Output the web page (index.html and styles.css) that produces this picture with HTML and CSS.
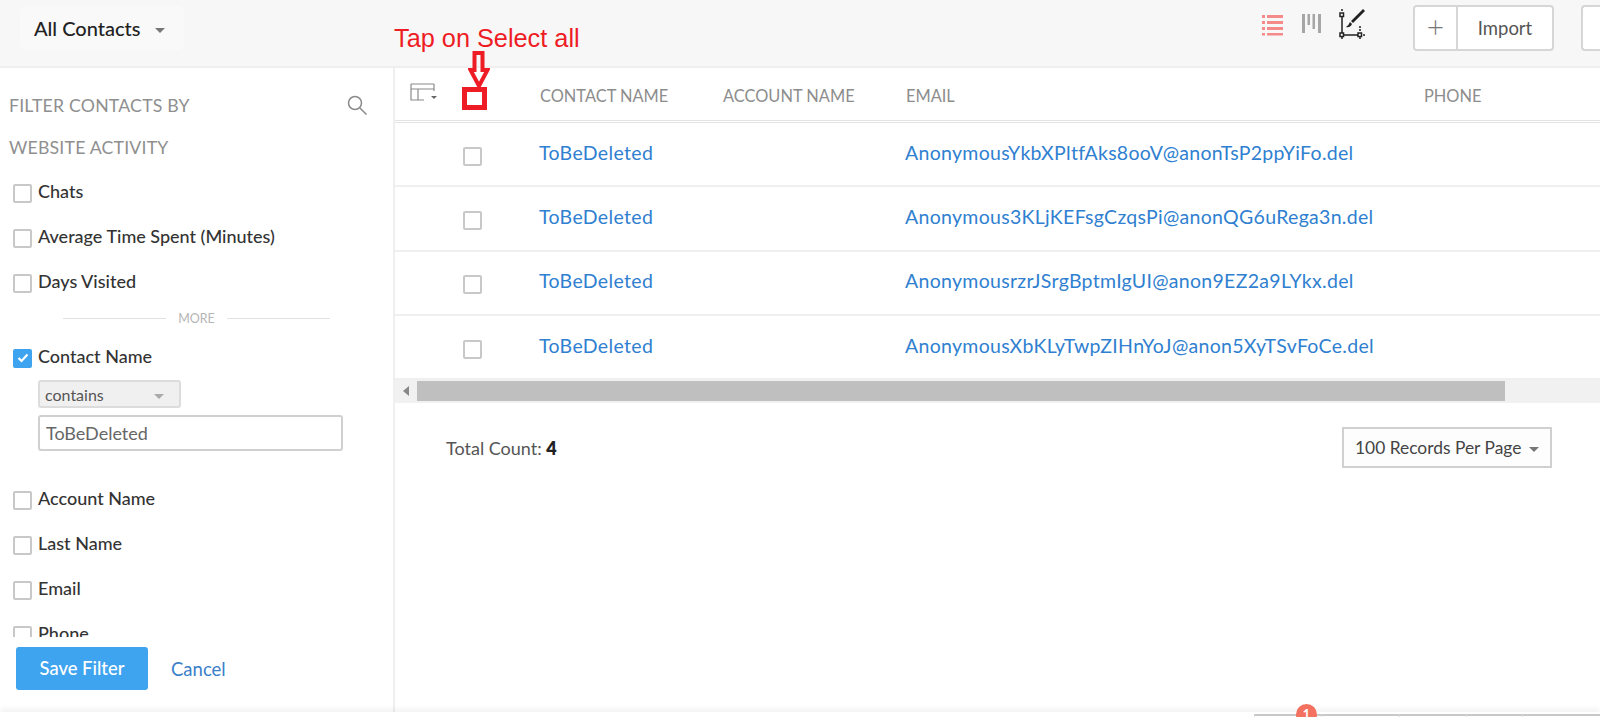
FILE: index.html
```html
<!DOCTYPE html>
<html lang="en">
<head>
<meta charset="utf-8">
<title>All Contacts</title>
<link rel="stylesheet" href="styles.css">
</head>
<body>
<div class="app">
  <header class="topbar">
    <div class="view-picker"><span>All Contacts</span><i class="caret"></i></div>
    <div class="top-actions">
      <div class="view-icons">
        <svg class="ico" width="21" height="24" viewBox="0 0 21 24"><g fill="#f58a8a"><rect x="0" y="2" width="3" height="3"/><rect x="5" y="2" width="16" height="3"/><rect x="0" y="8" width="3" height="3"/><rect x="5" y="8" width="16" height="3"/><rect x="0" y="14" width="3" height="3"/><rect x="5" y="14" width="16" height="3"/><rect x="0" y="20" width="3" height="2.500"/><rect x="5" y="20" width="16" height="2.500"/></g></svg>
        <svg class="ico" width="19" height="22" viewBox="0 0 19 22"><g fill="#a6a6a6"><rect x="0" y="1" width="3" height="19"/><rect x="5.500" y="1" width="2.500" height="11"/><rect x="10.500" y="1" width="2.500" height="15"/><rect x="16" y="1" width="3" height="19"/></g></svg>
        <svg class="ico" width="28" height="34" viewBox="0 0 28 34"><g fill="none" stroke="#222" stroke-width="1.500"><path d="M3 7V27H21"/><rect x="1" y="5" width="3.500" height="3.500" fill="#fff"/><rect x="1" y="25" width="3.500" height="3.500" fill="#fff"/><rect x="19" y="25" width="3.500" height="3.500" fill="#fff"/><path d="M3 1v3M3 29v3M21 18v6M21 29v3M24 27h3" stroke-dasharray="2 1"/></g><path d="M24 1 L26 3 L14 15 L12 13 Z M11 14 L13 16 Q11 20 7 19 Q10 17 11 14 Z" fill="#222"/></svg>
      </div>
      <div class="btn-group"><span class="btn-plus">+</span><span class="btn-import">Import</span></div>
      <div class="btn-edge"></div>
    </div>
  </header>

  <div class="main">
    <aside class="sidebar">
      <div class="side-head">
        <div class="side-title-row"><span>FILTER CONTACTS BY</span>
          <svg width="22" height="22" viewBox="0 0 22 22" fill="none" stroke="#8a8a8a" stroke-width="1.500"><circle cx="9" cy="9" r="6.500"/><path d="M14 14l6.500 6.500"/></svg>
        </div>
        <div class="side-title-row">WEBSITE ACTIVITY</div>
      </div>
      <div class="filters">
        <label class="filter"><i class="box"></i>Chats</label>
        <label class="filter"><i class="box"></i>Average Time Spent (Minutes)</label>
        <label class="filter"><i class="box"></i>Days Visited</label>
        <div class="more"><span>MORE</span></div>
        <label class="filter"><i class="box checked"><svg width="12" height="10" viewBox="0 0 12 10"><path d="M1.500 5l3 3 6-6.500" fill="none" stroke="#fff" stroke-width="2.200"/></svg></i>Contact Name</label>
        <div class="select">contains<i class="caret caret-light"></i></div>
        <div class="input">ToBeDeleted</div>
        <label class="filter filter-gap"><i class="box"></i>Account Name</label>
        <label class="filter"><i class="box"></i>Last Name</label>
        <label class="filter"><i class="box"></i>Email</label>
        <label class="filter"><i class="box"></i>Phone</label>
      </div>
      <div class="side-foot">
        <span class="btn-save">Save Filter</span>
        <span class="cancel">Cancel</span>
      </div>
    </aside>

    <section class="content">
      <div class="row row-head">
        <span class="col-icon">
          <svg width="28" height="22" viewBox="0 0 28 22" fill="none" stroke="#8a8a8a" stroke-width="1.200"><path d="M1 2h23M1 7h23M1 2v16h13M8 7v11M24 2v7" /><path d="M21 14h6l-3 3z" fill="#666" stroke="none"/></svg>
        </span>
        <span></span>
        <span class="hd">CONTACT NAME</span>
        <span class="hd">ACCOUNT NAME</span>
        <span class="hd">EMAIL</span>
        <span class="hd">PHONE</span>
      </div>
      <div class="row row-body"><span></span><i class="box"></i><a class="name">ToBeDeleted</a><span></span><a>AnonymousYkbXPltfAks8ooV@anonTsP2ppYiFo.del</a><span></span></div>
      <div class="row row-body"><span></span><i class="box"></i><a class="name">ToBeDeleted</a><span></span><a>Anonymous3KLjKEFsgCzqsPi@anonQG6uRega3n.del</a><span></span></div>
      <div class="row row-body"><span></span><i class="box"></i><a class="name">ToBeDeleted</a><span></span><a>AnonymousrzrJSrgBptmIgUI@anon9EZ2a9LYkx.del</a><span></span></div>
      <div class="row row-body"><span></span><i class="box"></i><a class="name">ToBeDeleted</a><span></span><a>AnonymousXbKLyTwpZIHnYoJ@anon5XyTSvFoCe.del</a><span></span></div>
      <div class="scrollbar"><i class="scroll-arrow"></i><div class="scroll-thumb"></div></div>
      <div class="table-foot">
        <span class="total">Total Count: <b>4</b></span>
        <span class="per-page">100 Records Per Page<i class="caret"></i></span>
      </div>
    </section>
  </div>

  <footer class="bottom">
    <span class="tab tab-a"><span class="badge">1</span></span><span class="tab tab-b"></span><span class="tab tab-c"></span><span class="tab tab-d"></span><span class="tab tab-e"></span>
  </footer>
</div>

<div class="note">Tap on Select all</div>
<svg class="note-arrow" width="22" height="38" viewBox="0 0 22 38" fill="none" stroke="#ee1c25" stroke-width="4"><path d="M6.500 2h8V19h5L11 35 2.500 19h4z"/></svg>
<div class="note-box"></div>
</body>
</html>
```
FILE: styles.css
```css
* { box-sizing: border-box; }
html, body { margin: 0; height: 100%; overflow: hidden; background: #fff; }
body { font-family: Lato, "Open Sans", sans-serif; color: #333; font-size: 16px; }
i { font-style: normal; display: block; }

.app { height: 717px; display: flex; flex-direction: column; }

/* top bar */
.topbar { height: 68px; flex: none; background: #f7f7f7; border-bottom: 2px solid #efefef; display: flex; justify-content: space-between; padding-left: 20px; }
.view-picker { width: 164px; height: 44px; margin-top: 6px; padding-left: 14px; background: #f9f9f9; border-radius: 6px; display: flex; align-items: center; font-size: 20px; font-weight: 500; color: #222; }
.caret { width: 0; height: 0; border-left: 5px solid transparent; border-right: 5px solid transparent; border-top: 5px solid #777; margin-left: 14px; margin-top: 4px; }
.caret-light { border-top-color: #aaa; margin-left: 50px; }
.top-actions { display: flex; align-items: flex-start; }
.view-icons { display: flex; align-items: flex-start; gap: 19px; margin-right: 46px; padding-top: 13px; }
.view-icons .ico:last-child { margin-top: -5px; margin-left: -1px; }
.btn-group { display: flex; width: 141px; height: 46px; margin-top: 5px; background: #fff; border: 2px solid #d6d6d6; border-radius: 4px; }
.btn-plus { width: 43px; border-right: 2px solid #d6d6d6; color: #777; font-size: 30px; font-weight: 300; line-height: 38px; text-align: center; }
.btn-import { flex: 1; text-align: center; line-height: 42px; font-size: 18.500px; color: #555; }
.btn-edge { width: 19px; height: 46px; margin-top: 5px; margin-left: 27px; background: #fff; border: 2px solid #d6d6d6; border-right: 0; border-radius: 4px 0 0 4px; }

/* main */
.main { flex: 1; min-height: 0; display: flex; }
.sidebar { width: 395px; flex: none; border-right: 2px solid #efefef; display: flex; flex-direction: column; }
.side-head { padding: 16px 25px 0 9px; }
.side-title-row { height: 42px; display: flex; align-items: center; justify-content: space-between; color: #8f8f8f; font-size: 17.700px; letter-spacing: .2px; }
.filters { height: 469px; flex: none; overflow: hidden; padding-left: 13px; }
.filter { height: 45px; display: flex; align-items: center; font-size: 18px; font-weight: 500; color: #333; }
.filter .box { margin-right: 6px; margin-top: 5px; }
.filter-gap { margin-top: 24px; }
.box { width: 19px; height: 19px; border: 2px solid #c8c8c8; border-radius: 2px; background: #fff; flex: none; }
.box.checked { background: #3fa4ef; border-color: #3fa4ef; display: flex; align-items: center; justify-content: center; }
.more { height: 30px; width: 267px; margin-left: 50px; display: flex; align-items: center; color: #b5b5b5; font-size: 12.500px; gap: 12px; }
.more::before, .more::after { content: ""; flex: 1; height: 1px; background: #e2e2e2; }
.select { width: 143px; height: 28px; margin: 2px 0 0 25px; padding-left: 5px; display: flex; align-items: center; background: #f0f0f0; border: 2px solid #dcdcdc; border-radius: 3px; color: #555; font-size: 16px; }
.input { width: 305px; height: 36px; margin: 7px 0 0 25px; padding-left: 6px; display: flex; align-items: center; border: 2px solid #d0d0d0; border-radius: 3px; color: #666; font-size: 18px; }
.side-foot { display: flex; align-items: center; padding: 10px 0 0 16px; }
.btn-save { width: 132px; height: 43px; background: #3fa4ef; border-radius: 3px; color: #fff; font-size: 18.400px; font-weight: 500; text-align: center; line-height: 43px; }
.cancel { margin-left: 23px; color: #3a80c9; font-size: 18.500px; }

/* table */
.content { flex: 1; min-width: 0; overflow: hidden; }
.row { display: grid; grid-template-columns: 68px 76px 183px 183px 518px 1fr; align-items: center; }
.row-head { height: 55px; padding-top: 2px; border-bottom: 3px double #e4e4e4; color: #8d8d8d; font-size: 16.400px; }
.hd { padding-left: 1px; }
.col-icon { padding: 0 0 5px 15px; display: flex; }
.row-body { height: 64.300px; border-bottom: 2px solid #efefef; font-size: 19.500px; letter-spacing: .3px; }
.row-body a { color: #2f80d0; white-space: nowrap; padding-bottom: 4px; }
.row-body .name { letter-spacing: .35px; }
.row-body .box { margin-top: 4px; }
.scrollbar { height: 23px; background: #f1f1f1; display: flex; align-items: center; padding-bottom: 1px; }
.scroll-arrow { width: 0; height: 0; margin: 0 8px 0 8px; border-top: 5px solid transparent; border-bottom: 5px solid transparent; border-right: 6px solid #888; }
.scroll-thumb { width: 1088px; height: 20px; background: #bfbfbf; }
.table-foot { display: flex; justify-content: space-between; align-items: center; padding: 24px 48px 0 51px; }
.total { font-size: 18px; color: #555; }
.total b { color: #222; font-weight: 800; }
.per-page { width: 210px; height: 41px; display: flex; align-items: center; padding-left: 11px; background: #fdfdfd; border: 2px solid #d0d0d0; font-size: 17.400px; color: #444; }
.per-page .caret { margin-left: 8px; }

/* bottom */
.bottom { height: 5px; flex: none; display: flex; align-items: flex-end; padding-left: 1254px; box-shadow: 0 -3px 5px rgba(0,0,0,.06); position: relative; }
.tab { height: 3px; border-top: 2px solid #c8c8c8; border-left: 1px solid #ddd; flex: none; }
.tab-a { width: 67px; position: relative; }
.tab-b { width: 78px; }
.tab-c { width: 67px; }
.tab-d { width: 56px; }
.tab-e { flex: 1; }
.badge { position: absolute; left: 41px; top: -12px; width: 21px; height: 21px; border-radius: 50%; background: #f4715f; color: #fff; font-size: 13px; font-weight: 700; text-align: center; line-height: 21px; }

/* annotations over the screenshot */
.note { position: absolute; left: 394px; top: 23px; font-family: "Liberation Sans", Arial, sans-serif; font-size: 25.300px; line-height: 30px; color: #ee1c25; }
.note-arrow { position: absolute; left: 468px; top: 51px; }
.note-box { position: absolute; left: 462px; top: 87px; width: 25px; height: 23px; border: 5px solid #ee1c25; }
```
